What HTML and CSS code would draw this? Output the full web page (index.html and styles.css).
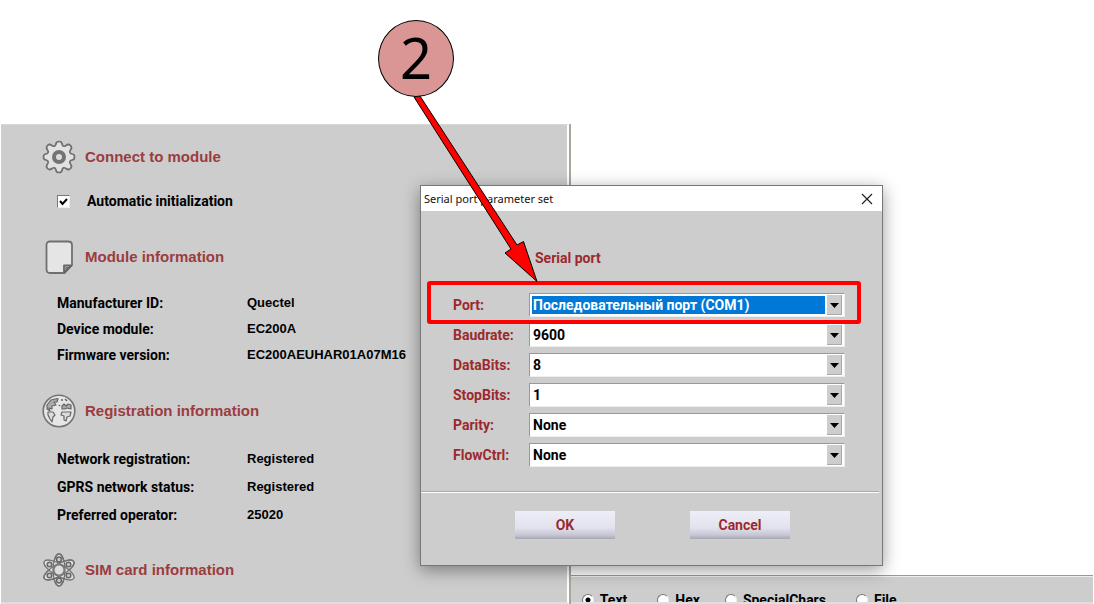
FILE: index.html
```html
<!DOCTYPE html>
<html lang="en">
<head>
  <meta charset="UTF-8">
  <title>Serial port parameter set</title>
  <link rel="stylesheet" href="styles.css">
</head>
<body>

<div class="app">
  <div class="info">
    <!-- Connect -->
    <h2 class="heading">
      <svg class="icon" viewBox="0 0 34 34">
        <path d="M14 4 Q14 1.500 17 1.500 Q20 1.500 20 4 Q21 7.500 24 5.500 Q26.500 3.500 28.500 5.500 Q30.500 7.500 28.500 10 Q26.500 13 30 14 Q32.500 14 32.500 17 Q32.500 20 30 20 Q26.500 21 28.500 24 Q30.500 26.500 28.500 28.500 Q26.500 30.500 24 28.500 Q21 26.500 20 30 Q20 32.500 17 32.500 Q14 32.500 14 30 Q13 26.500 10 28.500 Q7.500 30.500 5.500 28.500 Q3.500 26.500 5.500 24 Q7.500 21 4 20 Q1.500 20 1.500 17 Q1.500 14 4 14 Q7.500 13 5.500 10 Q3.500 7.500 5.500 5.500 Q7.500 3.500 10 5.500 Q13 7.500 14 4Z" fill="#e2e2e2" stroke="#707070" stroke-width="1.700"/>
        <circle cx="17" cy="17" r="5" fill="#ddd" stroke="#747474" stroke-width="4"/>
      </svg>
      Connect to module
    </h2>
    <div class="check-row">
      <input type="checkbox" id="auto-init" class="check" checked>
      <label for="auto-init">Automatic initialization</label>
    </div>

    <!-- Module -->
    <h2 class="heading">
      <svg class="icon" viewBox="0 0 34 34">
        <path d="M8 1.500H26Q30 1.500 30 5V25L22.500 33H8Q4.500 33 4.500 29V5Q4.500 1.500 8 1.500Z" fill="#e5e5e5" stroke="#707070" stroke-width="1.800"/>
        <path d="M22 32.500V25.500H29.500Z" fill="#ccc" stroke="#666" stroke-width="1.800" stroke-linejoin="round"/>
        <path d="M23.500 30V27H26.500Z" fill="#666"/>
      </svg>
      Module information
    </h2>
    <dl class="list">
      <dt>Manufacturer ID:</dt><dd>Quectel</dd>
      <dt>Device module:</dt><dd>EC200A</dd>
      <dt>Firmware version:</dt><dd>EC200AEUHAR01A07M16</dd>
    </dl>

    <!-- Registration -->
    <h2 class="heading">
      <svg class="icon" viewBox="0 0 34 34">
        <circle cx="17" cy="17" r="15.800" fill="#e6e6e6" stroke="#747474" stroke-width="1.600"/>
        <g fill="#aaa" stroke="#666" stroke-width="1.200" stroke-linejoin="round">
          <path d="M5 11L9 6L13 5L16 4.500L15 8L12 8L14 11L10 12L10 15L7 14L8 17L5 15Z"/>
          <path d="M6 18L11 18L13 21L11 23L10 28L8 25L6 21Z" fill="#ddd"/>
          <path d="M20 12L22 10L24 12L26 10L29 11L29 15L25 14L23 15L20 15Z"/>
          <path d="M20 18L29 18L28 22L25 23L24 27L22 26L22 22L19 21Z" fill="#ddd"/>
        </g>
        <path d="M19 6L21 6M23 5L25 7M17 11L18 12" stroke="#666" stroke-width="1.500"/>
      </svg>
      Registration information
    </h2>
    <dl class="list list-wide">
      <dt>Network registration:</dt><dd>Registered</dd>
      <dt>GPRS network status:</dt><dd>Registered</dd>
      <dt>Preferred operator:</dt><dd>25020</dd>
    </dl>

    <!-- SIM card -->
    <h2 class="heading">
      <svg class="icon" viewBox="0 0 34 34">
        <g fill="#e2e2e2" stroke="#727272" stroke-width="1.400">
          <ellipse cx="17" cy="17" rx="6" ry="16"/>
          <ellipse cx="17" cy="17" rx="6" ry="17" transform="rotate(60 17 17)"/>
          <ellipse cx="17" cy="17" rx="6" ry="17" transform="rotate(-60 17 17)"/>
        </g>
        <g fill="none" stroke="#727272" stroke-width="1.300">
          <ellipse cx="17" cy="17" rx="6" ry="16"/>
          <ellipse cx="17" cy="17" rx="6" ry="17" transform="rotate(60 17 17)"/>
        </g>
        <circle cx="17" cy="17" r="5.200" fill="#ddd" stroke="#777" stroke-width="1.500"/>
        <g fill="#ccc" stroke="#666" stroke-width="1.500">
          <circle cx="17" cy="6.500" r="2.400"/>
          <circle cx="17" cy="27.500" r="2.400"/>
          <circle cx="7.500" cy="11.500" r="2.300"/>
          <circle cx="26.500" cy="11.500" r="2.300"/>
          <circle cx="7.500" cy="22.500" r="2.300"/>
          <circle cx="26.500" cy="22.500" r="2.300"/>
        </g>
      </svg>
      SIM card information
    </h2>
  </div>

  <div class="terminal">
    <div class="output"></div>
    <div class="formats">
      <label class="format format-text"><input type="radio" name="format" class="radio" checked>Text</label>
      <label class="format format-hex"><input type="radio" name="format" class="radio">Hex</label>
      <label class="format format-special"><input type="radio" name="format" class="radio">SpecialChars</label>
      <label class="format"><input type="radio" name="format" class="radio">File</label>
    </div>
  </div>
</div>

<!-- Dialog window -->
<div class="dialog" role="dialog" aria-labelledby="dialog-title">
  <div class="titlebar">
    <span id="dialog-title">Serial port parameter set</span>
    <button class="close" aria-label="Close">
      <svg width="12" height="12" viewBox="0 0 12 12"><path d="M1 1L11 11M11 1L1 11" stroke="#222" stroke-width="1.200"/></svg>
    </button>
  </div>
  <form class="form">
    <h3 class="form-title">Serial port</h3>
    <div class="fields">
      <label for="port">Port:</label>
      <select id="port" class="combo combo-selected"><option>Последовательный порт (COM1)</option></select>
      <label for="baudrate">Baudrate:</label>
      <select id="baudrate" class="combo"><option>9600</option></select>
      <label for="databits">DataBits:</label>
      <select id="databits" class="combo"><option>8</option></select>
      <label for="stopbits">StopBits:</label>
      <select id="stopbits" class="combo"><option>1</option></select>
      <label for="parity">Parity:</label>
      <select id="parity" class="combo"><option>None</option></select>
      <label for="flowctrl">FlowCtrl:</label>
      <select id="flowctrl" class="combo"><option>None</option></select>
    </div>
    <div class="buttons">
      <button type="button" class="btn">OK</button>
      <button type="button" class="btn">Cancel</button>
    </div>
  </form>
</div>

<!-- Step marker -->
<div class="mark-box"></div>
<svg class="arrow" width="130" height="194" viewBox="0 0 130 194">
  <path d="M3 6L9 5L106 154L112.500 150.500L126 190.500L94 162L100 158Z" fill="red" stroke="#000" stroke-width="1"/>
</svg>
<div class="step">2</div>

</body>
</html>
```

FILE: styles.css
```css
* {
  box-sizing: border-box;
}

body {
  margin: 0;
  background: #fff;
  font-family: Roboto, "Liberation Sans", sans-serif;
  font-size: 14px;
  font-weight: bold;
  color: #000;
}

.app {
  display: flex;
  height: 100vh;
  padding: 124px 1px 0 1px;
  overflow: hidden;
}

.info {
  width: 52%;
  padding: 15px 0 0 41px;
  background: #cdcdcd;
  border-top: 1px solid #d8d8d8;
  border-right: 2px solid #fff;
  border-bottom: 2px solid #dedede;
  font-family: "Liberation Sans", Arial, sans-serif;
}

.heading {
  display: flex;
  align-items: center;
  gap: 9px;
  height: 34px;
  margin: 0;
  font-size: 15px;
  line-height: 16px;
  color: #9b3c40;
}

.icon {
  width: 34px;
  height: 34px;
}

.check-row {
  display: flex;
  align-items: center;
  gap: 17px;
  height: 22px;
  margin: 16px 0 28px 15px;
  font-family: Roboto, sans-serif;
}

.check {
  appearance: none;
  width: 13px;
  height: 13px;
  margin: 0;
  border: 1px solid;
  border-color: #777 #eee #eee #777;
  background: #fff url("data:image/svg+xml,%3Csvg xmlns='http://www.w3.org/2000/svg' viewBox='0 0 11 11'%3E%3Cpath d='M2 5l2.500 3L9 3' fill='none' stroke='black' stroke-width='2'/%3E%3C/svg%3E");
}

.list {
  display: grid;
  grid-template-columns: 190px 1fr;
  margin: 16px 0 26px 15px;
  line-height: 26px;
}

.list dt {
  font-family: Roboto, sans-serif;
}

.list dd {
  margin: 0;
  font-size: 13px;
}

.list-wide {
  margin: 17px 0 24px 15px;
  line-height: 28px;
}

.terminal {
  flex: 1;
  display: flex;
  flex-direction: column;
  border-left: 2px solid #aaa69c;
}

.output {
  flex: 1;
}

.formats {
  display: flex;
  height: 29px;
  padding: 13px 0 0 11px;
  overflow: hidden;
  background: #cdcdcd;
  border-top: 1px solid #999;
  border-bottom: 2px solid #dedede;
  box-shadow: inset 0 1px #eee;
}

.format {
  display: flex;
  align-items: center;
  gap: 6px;
  height: 22px;
}

.format-text {
  margin-right: 30px;
}

.format-hex {
  margin-right: 25px;
}

.format-special {
  margin-right: 30px;
}

.radio {
  appearance: none;
  width: 12px;
  height: 12px;
  margin: 0;
  border: 1px solid;
  border-color: #777 #eee #eee #777;
  border-radius: 50%;
  background: #fff;
}

.radio:checked {
  background: radial-gradient(circle, #000 2px, #fff 3px);
}

.dialog {
  position: absolute;
  left: 420px;
  top: 185px;
  width: 463px;
  background: #cdcdcd;
  border: 1px solid #777;
  box-shadow: 0 4px 16px rgba(0, 0, 0, 0.4);
  color: #9b2a2e;
}

.titlebar {
  display: flex;
  align-items: center;
  justify-content: space-between;
  height: 25px;
  padding: 0 9px 0 3px;
  background: #fff;
  font: 11px "Noto Sans", sans-serif;
  color: #111;
}

.close {
  display: flex;
  padding: 0;
  border: 0;
  background: none;
}

.form-title {
  margin: 0;
  padding: 37px 0 25px 114px;
  font-size: 14px;
  line-height: 20px;
}

.fields {
  display: grid;
  grid-template-columns: 76px 1fr;
  row-gap: 6px;
  align-items: center;
  padding: 0 37px 24px 32px;
}

.combo {
  appearance: none;
  height: 24px;
  padding: 0 20px 0 3px;
  border: 1px solid;
  border-color: #999 #eee #eee #999;
  border-radius: 0;
  outline: 0;
  font: bold 14px Roboto, sans-serif;
  color: #000;
  background: #fff url("data:image/svg+xml,%3Csvg xmlns='http://www.w3.org/2000/svg' width='15' height='20'%3E%3Cpath d='M0 0h15v20H0z' fill='%23cdcdcd'/%3E%3Cpath d='M14.500 0v19.500H0' fill='none' stroke='%23aaa'/%3E%3Cpath d='M3 8h9l-4.500 5z'/%3E%3C/svg%3E") no-repeat right 2px center;
}

.combo-selected {
  color: #fff;
  background-image: url("data:image/svg+xml,%3Csvg xmlns='http://www.w3.org/2000/svg' width='15' height='20'%3E%3Cpath d='M0 0h15v20H0z' fill='%23cdcdcd'/%3E%3Cpath d='M14.500 0v19.500H0' fill='none' stroke='%23aaa'/%3E%3Cpath d='M3 8h9l-4.500 5z'/%3E%3C/svg%3E"), linear-gradient(#0078d7, #0078d7);
  background-position: right 2px center, 2px center;
  background-size: 15px 20px, calc(100% - 21px) 18px;
}

.buttons {
  display: flex;
  justify-content: center;
  gap: 75px;
  margin-right: 3px;
  padding: 19px 0 26px 5px;
  border-top: 1px solid #aaa;
  box-shadow: inset 0 1px #fff;
}

.btn {
  width: 100px;
  height: 28px;
  border: 0;
  font: bold 14px Roboto, sans-serif;
  color: #9b2a2e;
  background: linear-gradient(#eeeef8, #e2e2ee 60%, #c8c8d4 85%, #a8a8b4);
}

.mark-box {
  position: absolute;
  left: 427px;
  top: 281px;
  width: 434px;
  height: 43px;
  border: 4px solid red;
  border-radius: 3px;
  pointer-events: none;
}

.arrow {
  position: absolute;
  left: 411px;
  top: 91px;
  pointer-events: none;
}

.step {
  position: absolute;
  left: 378px;
  top: 20px;
  display: flex;
  align-items: center;
  justify-content: center;
  width: 76px;
  height: 77px;
  padding-bottom: 4px;
  border: 1px solid #000;
  border-radius: 50%;
  background: #d99694;
  font: 56px "Noto Sans", sans-serif;
}
```
